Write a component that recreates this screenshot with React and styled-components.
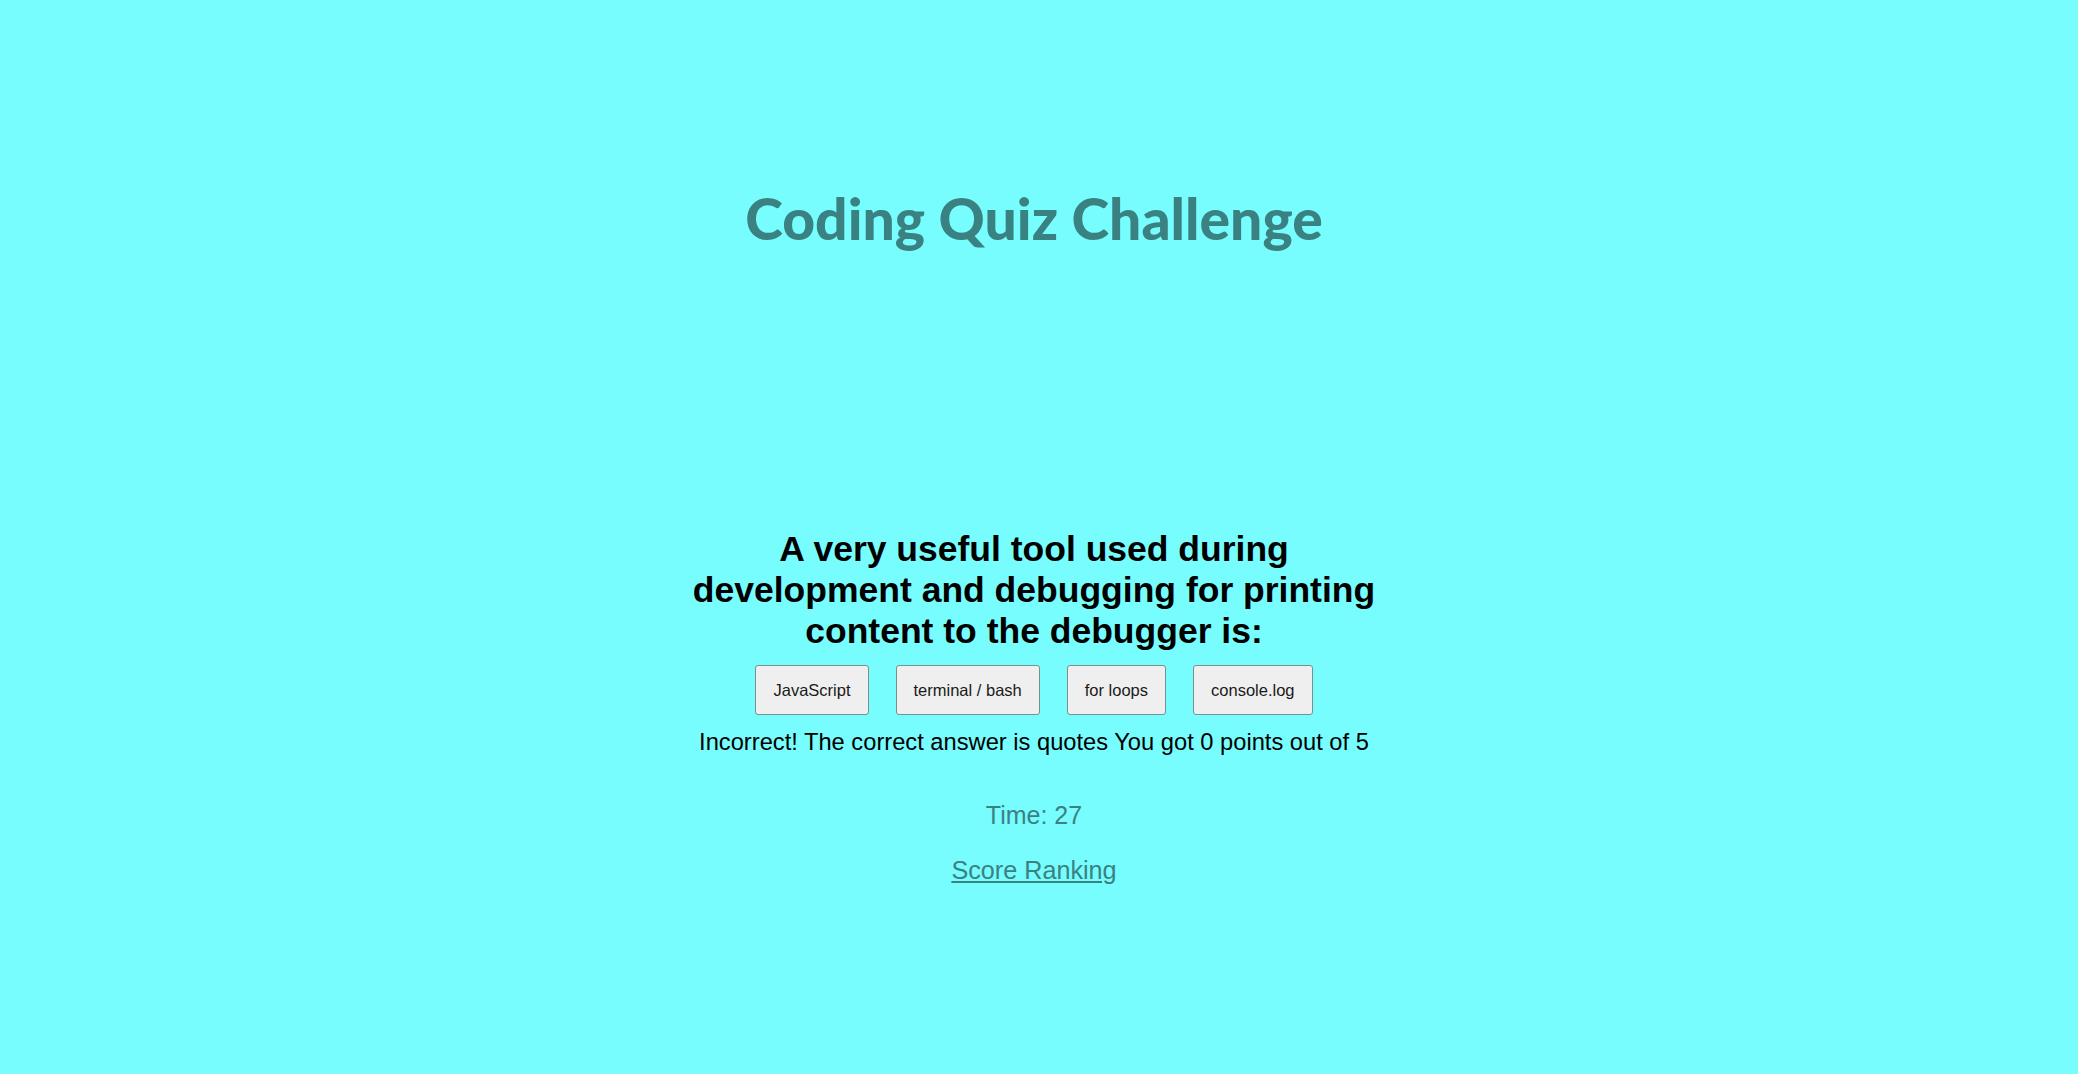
import React from "react";
import styled, { createGlobalStyle } from "styled-components";

const Global = createGlobalStyle`
  html, body {
    margin: 0;
    padding: 0;
    background: #77fdfe;
  }
  body {
    font-family: "Liberation Sans", Arial, sans-serif;
    min-height: 1074px;
  }
`;

const Page = styled.div`
  box-sizing: border-box;
  width: 100%;
  min-height: 1074px;
  padding: 0 10px 0 0;
  background: #77fdfe;
`;

const Header = styled.header`
  padding-top: 184px;
  display: flex;
  justify-content: center;
`;

const Title = styled.h1`
  margin: 0;
  font-family: "Lato", "Open Sans", sans-serif;
  font-weight: 900;
  font-size: 57px;
  line-height: 68px;
  color: #3a8282;
`;

const Main = styled.main`
  margin-top: 277px;
  display: flex;
  flex-direction: column;
  align-items: center;
`;

const Question = styled.h2`
  margin: 0;
  width: 710px;
  text-align: center;
  font-family: "Liberation Sans", Arial, sans-serif;
  font-weight: 700;
  font-size: 35.5px;
  line-height: 41px;
  color: #000;
`;

const Choices = styled.div`
  margin-top: 13px;
  display: flex;
  gap: 27px;
  justify-content: center;
`;

const Choice = styled.button`
  box-sizing: border-box;
  height: 50px;
  padding: 0 17px;
  font-family: "Liberation Sans", Arial, sans-serif;
  font-size: 16.5px;
  color: #1a1a1a;
  background: #efefef;
  border: 1px solid #7b8f8f;
  border-radius: 3px;
  cursor: pointer;
`;

const Feedback = styled.p`
  margin: 14px 0 0;
  font-size: 23.7px;
  line-height: 27px;
  color: #000;
`;

const Timer = styled.p`
  margin: 45px 0 0;
  font-size: 25px;
  line-height: 29px;
  color: #3a8282;
`;

const Ranking = styled.a`
  display: block;
  margin-top: 26px;
  font-size: 25.2px;
  line-height: 29px;
  color: #3a8282;
  text-decoration: underline;
`;

const choices = ["JavaScript", "terminal / bash", "for loops", "console.log"];

export default function App() {
  return (
    <Page>
      <Global />
      <Header>
        <Title>Coding Quiz Challenge</Title>
      </Header>
      <Main>
        <Question>
          A very useful tool used during development and debugging for printing
          content to the debugger is:
        </Question>
        <Choices>
          {choices.map((c) => (
            <Choice key={c}>{c}</Choice>
          ))}
        </Choices>
        <Feedback>
          Incorrect! The correct answer is quotes You got 0 points out of 5
        </Feedback>
        <Timer>Time: 27</Timer>
        <Ranking href="#">Score Ranking</Ranking>
      </Main>
    </Page>
  );
}
